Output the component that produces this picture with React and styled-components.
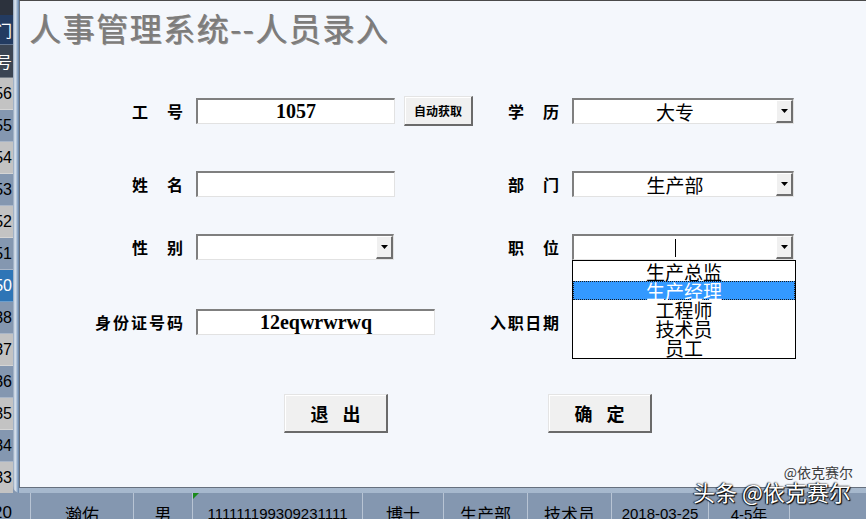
import React from "react";
import styled, { createGlobalStyle } from "styled-components";

const GlobalStyle = createGlobalStyle`
  html, body {
    margin: 0;
    padding: 0;
    background: #f4f7fc;
  }
  body {
    font-family: "Noto Sans CJK SC", "Noto Sans", sans-serif;
  }
`;

const headerRows = [
  { text: "部门", h: 30, bg: "#233b61", fg: "#ffffff" },
  { text: "工号", h: 33, bg: "#3c4553", fg: "#ffffff" },
];

const sideRows = ["1056", "1055", "1054", "1053", "1052", "1051", "1050", "1038", "1037", "1036", "1035", "1034", "1033"];

const positions = ["生产总监", "生产经理", "工程师", "技术员", "员工"];

const bottomCells = [
  { text: "1020", w: 31, align: "flex-end", pad: 18 },
  { text: "瀚佑", w: 103 },
  { text: "男", w: 59 },
  { text: "111111199309231111", w: 170, num: true, mark: true },
  { text: "博士", w: 81 },
  { text: "生产部", w: 84 },
  { text: "技术员", w: 84 },
  { text: "2018-03-25", w: 97, num: true },
  { text: "4-5年", w: 81, num: true },
  { text: "正常", w: 130, align: "flex-end", pad: 0 },
];

const Page = styled.div`
  position: relative;
  width: 866px;
  height: 519px;
  overflow: hidden;
  display: flex;
  flex-direction: column;
  background: #8497b0;
`;

const Upper = styled.div`
  display: flex;
  height: 493px;
  flex-shrink: 0;
  overflow: hidden;
`;

const SideColumn = styled.div`
  width: 13px;
  flex-shrink: 0;
  display: flex;
  flex-direction: column;
  padding-top: 15px;
  background: #2c323d;
`;

const SideCell = styled.div`
  box-sizing: border-box;
  height: ${({ $h }) => $h}px;
  flex-shrink: 0;
  display: flex;
  align-items: center;
  justify-content: flex-end;
  overflow: hidden;
  white-space: nowrap;
  padding-right: 1px;
  background: ${({ $bg }) => $bg};
  color: ${({ $fg }) => $fg};
  font-family: "Liberation Sans", "Noto Sans CJK SC", sans-serif;
  font-size: 16px;
  border-bottom: 1px solid rgba(255, 255, 255, 0.3);
`;

const Frame = styled.div`
  flex: 1;
  display: flex;
  padding: 0 0 5px 6px;
  border-bottom-left-radius: 7px;
  background:
    linear-gradient(to right, #8ea2ba, #dfe7f1 35%, #a9bdd4 65%, #5e7fa7) left top / 6px 100% no-repeat,
    linear-gradient(to bottom, #dfe6ef, #a6b8cd);
`;

const Client = styled.div`
  position: relative;
  flex: 1;
  display: flex;
  flex-direction: column;
  background: #f4f7fc;
  border-top: 1px solid #4a4a4a;
  border-left: 1px solid #66707e;
  border-bottom: 1px solid #66707e;
`;

const Title = styled.h1`
  margin: 7px 0 0 9px;
  font-size: 32px;
  line-height: 38px;
  font-weight: 400;
  letter-spacing: 1.5px;
  color: #7c7c7c;
  text-shadow: 1px 1px 0 rgba(70, 58, 46, 0.55);
  white-space: nowrap;
`;

const Form = styled.div`
  margin-top: 50px;
  display: flex;
  flex-direction: column;
`;

const FormRow = styled.div`
  display: grid;
  grid-template-columns: 163px 282px 68px 226px;
  column-gap: 13px;
  align-items: center;
  height: 30px;
  margin-top: ${({ $gap }) => $gap || 0}px;
`;

const Label = styled.span`
  display: block;
  justify-self: end;
  width: ${({ $w }) => $w}px;
  font-size: 16px;
  line-height: 18px;
  font-weight: 700;
  color: #000;
  text-align: justify;
  text-align-last: justify;
  white-space: nowrap;
`;

const FieldGroup = styled.div`
  display: flex;
  align-items: center;
  gap: 9px;
`;

const Field = styled.div`
  box-sizing: border-box;
  width: ${({ $w }) => $w}px;
  height: 26px;
  display: flex;
  align-items: center;
  justify-content: center;
  background: #ffffff;
  border-style: solid;
  border-width: 2px 1px 1px 2px;
  border-color: #7f7f7f #e2e2e2 #e2e2e2 #7f7f7f;
  font-family: "Liberation Serif", serif;
  font-weight: 700;
  font-size: 20px;
  color: #000;
`;

const ComboWrap = styled.div`
  position: relative;
  width: ${({ $w }) => $w}px;
`;

const Combo = styled.div`
  box-sizing: border-box;
  width: 100%;
  height: 26px;
  display: flex;
  background: #ffffff;
  border-style: solid;
  border-width: 2px 1px 1px 2px;
  border-color: #7f7f7f #e2e2e2 #e2e2e2 #7f7f7f;
`;

const ComboText = styled.div`
  flex: 1;
  display: flex;
  align-items: center;
  justify-content: center;
  font-size: 19px;
  line-height: 1;
  color: #000;
`;

const Caret = styled.span`
  width: 1px;
  height: 18px;
  background: #000;
`;

const DropButton = styled.div`
  box-sizing: border-box;
  width: 17px;
  height: 23px;
  display: flex;
  align-items: center;
  justify-content: center;
  background: #f0f0f0;
  border-style: solid;
  border-width: 1px 2px 2px 1px;
  border-color: #ffffff #6f6f6f #6f6f6f #ffffff;
`;

const DropList = styled.ul`
  position: absolute;
  top: 100%;
  left: 0;
  z-index: 5;
  box-sizing: border-box;
  width: 224px;
  margin: 0;
  padding: 1px 0;
  list-style: none;
  background: #ffffff;
  border: 1px solid #000;
`;

const DropItem = styled.li`
  box-sizing: border-box;
  height: 19px;
  display: flex;
  align-items: center;
  justify-content: center;
  font-size: 19px;
  line-height: 19px;
  color: ${({ $active }) => ($active ? "#ffffff" : "#000000")};
  background: ${({ $active }) => ($active ? "#3399ff" : "transparent")};
  border: 1px dotted ${({ $active }) => ($active ? "#1a1a1a" : "transparent")};
`;

const RaisedButton = styled.button`
  box-sizing: border-box;
  width: ${({ $w }) => $w}px;
  height: ${({ $h }) => $h}px;
  padding: 0 0 0 ${({ $space }) => $space || 0}px;
  background: #f0f0f0;
  border-style: solid;
  border-width: 1px 2px 2px 1px;
  border-color: #e4e4e4 #6a6a6a #6a6a6a #e4e4e4;
  box-shadow: inset 1px 1px 0 #ffffff;
  font-family: "Noto Sans CJK SC", sans-serif;
  font-size: ${({ $size }) => $size}px;
  font-weight: 700;
  letter-spacing: ${({ $space }) => $space || 0}px;
  color: #000;
  white-space: nowrap;
`;

const ButtonRow = styled.div`
  display: flex;
  gap: 160px;
  margin-top: 57px;
  padding-left: 264px;
`;

const SmallMark = styled.div`
  position: absolute;
  right: 13px;
  top: 462px;
  font-size: 14px;
  line-height: 18px;
  color: #3c3c3c;
  white-space: nowrap;
`;

const BigMark = styled.div`
  position: absolute;
  left: 693px;
  top: 477px;
  z-index: 10;
  font-size: 22px;
  line-height: 28px;
  color: #ffffff;
  white-space: nowrap;
  text-shadow: 0 0 2px #000, 1px 1px 1px #000, -1px 0 1px #222;
`;

const DataRow = styled.div`
  display: flex;
  height: 40px;
  flex-shrink: 0;
  background: #8497b0;
`;

const DataCell = styled.div`
  position: relative;
  box-sizing: border-box;
  width: ${({ $w }) => $w}px;
  flex-shrink: 0;
  display: flex;
  align-items: center;
  justify-content: ${({ $align }) => $align || "center"};
  padding-right: ${({ $pad }) => $pad || 0}px;
  overflow: hidden;
  white-space: nowrap;
  border-right: 1px solid #b8c4d4;
  font-family: "Liberation Sans", "Noto Sans CJK SC", sans-serif;
  font-size: ${({ $num }) => ($num ? 15 : 17)}px;
  color: #000;
`;

const Marker = styled.span`
  position: absolute;
  left: 0;
  top: 0;
  width: 0;
  height: 0;
  border-top: 6px solid #1a8a1a;
  border-right: 6px solid transparent;
`;

function Arrow() {
  return (
    <svg width="7" height="5" viewBox="0 0 7 5">
      <polygon points="0,0 7,0 3.5,4" fill="#000" />
    </svg>
  );
}

function ComboBox({ width, value, caret, children }) {
  return (
    <ComboWrap $w={width}>
      <Combo>
        <ComboText>{caret ? <Caret /> : value}</ComboText>
        <DropButton>
          <Arrow />
        </DropButton>
      </Combo>
      {children}
    </ComboWrap>
  );
}

export default function App() {
  return (
    <>
      <GlobalStyle />
      <Page>
        <Upper>
          <SideColumn>
            {headerRows.map((r) => (
              <SideCell key={r.text} $h={r.h} $bg={r.bg} $fg={r.fg}>
                {r.text}
              </SideCell>
            ))}
            {sideRows.map((t, i) => {
              const active = t === "1050";
              const bg = active ? "#2e75b6" : i % 2 === 0 ? "#c3c3c3" : "#8497b0";
              return (
                <SideCell key={t} $h={32} $bg={bg} $fg={active ? "#ffffff" : "#000000"}>
                  {t}
                </SideCell>
              );
            })}
          </SideColumn>

          <Frame>
            <Client>
              <Title>人事管理系统--人员录入</Title>

              <Form>
                <FormRow>
                  <Label $w={51}>工号</Label>
                  <FieldGroup>
                    <Field $w={199}>1057</Field>
                    <RaisedButton $w={69} $h={30} $size={12}>
                      自动获取
                    </RaisedButton>
                  </FieldGroup>
                  <Label $w={51}>学历</Label>
                  <ComboBox width={222} value="大专" />
                </FormRow>

                <FormRow $gap={43}>
                  <Label $w={51}>姓名</Label>
                  <FieldGroup>
                    <Field $w={199} />
                  </FieldGroup>
                  <Label $w={51}>部门</Label>
                  <ComboBox width={222} value="生产部" />
                </FormRow>

                <FormRow $gap={33}>
                  <Label $w={51}>性别</Label>
                  <FieldGroup>
                    <ComboBox width={198} value="" />
                  </FieldGroup>
                  <Label $w={51}>职位</Label>
                  <ComboBox width={222} caret>
                    <DropList>
                      {positions.map((p) => (
                        <DropItem key={p} $active={p === "生产经理"}>
                          {p}
                        </DropItem>
                      ))}
                    </DropList>
                  </ComboBox>
                </FormRow>

                <FormRow $gap={45}>
                  <Label $w={88}>身份证号码</Label>
                  <FieldGroup>
                    <Field $w={239}>12eqwrwrwq</Field>
                  </FieldGroup>
                  <Label $w={69}>入职日期</Label>
                  <Field $w={222} />
                </FormRow>
              </Form>

              <ButtonRow>
                <RaisedButton $w={104} $h={39} $size={18} $space={14}>
                  退出
                </RaisedButton>
                <RaisedButton $w={104} $h={39} $size={18} $space={14}>
                  确定
                </RaisedButton>
              </ButtonRow>

              <SmallMark>@依克赛尔</SmallMark>
            </Client>
          </Frame>
        </Upper>

        <DataRow>
          {bottomCells.map((c) => (
            <DataCell key={c.text} $w={c.w} $align={c.align} $pad={c.pad} $num={c.num}>
              {c.mark && <Marker />}
              {c.text}
            </DataCell>
          ))}
        </DataRow>

        <BigMark>头条 @依克赛尔</BigMark>
      </Page>
    </>
  );
}
